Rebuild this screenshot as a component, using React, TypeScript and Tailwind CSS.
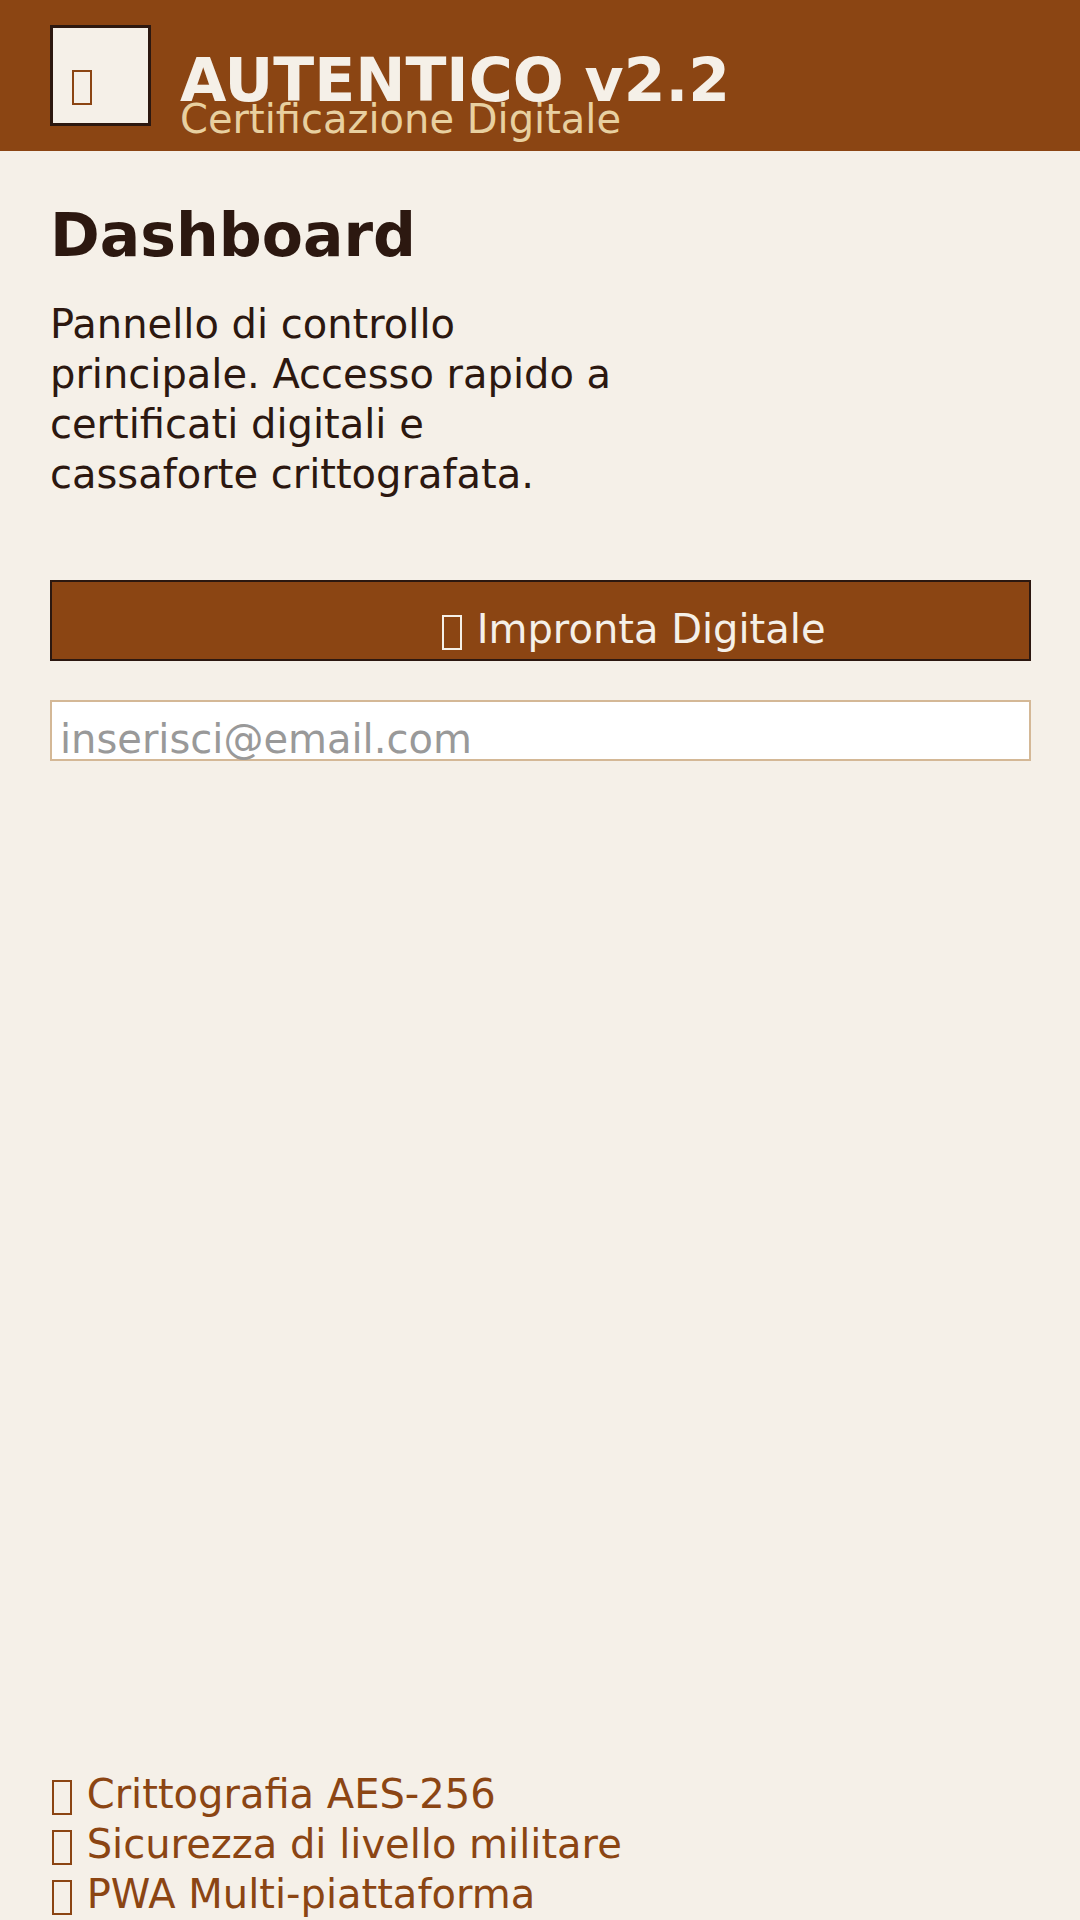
import React from "react";

function Glyph() {
  return (
    <span
      aria-hidden="true"
      className="mx-[2px] inline-block h-[35px] w-[20px] border-2 border-current align-[-7px]"
    />
  );
}

const features = ["Crittografia AES-256", "Sicurezza di livello militare", "PWA Multi-piattaforma"];

export default function App() {
  return (
    <div className="flex h-[1920px] w-[1080px] flex-col overflow-hidden bg-[#f5f0e8] font-['DejaVu_Sans',sans-serif] text-[40px] leading-[50px] text-[#2c1810]">
      <header className="flex h-[151px] shrink-0 bg-[#8b4513] pl-[50px] pt-[25px]">
        <div className="h-[101px] w-[101px] shrink-0 border-3 border-[#2c1810] bg-[#f5f0e8] pl-[17px] pt-[31px] text-[#8b4513]">
          <Glyph />
        </div>
        <div className="ml-[29px] whitespace-nowrap pt-[19px]">
          <h1 className="h-[50px] text-[60px] font-bold leading-[72px] text-[#f5f0e8]">AUTENTICO v2.2</h1>
          <p className="text-[#e8d0a0]">Certificazione Digitale</p>
        </div>
      </header>

      <main className="flex grow flex-col pl-[50px] pr-[49px]">
        <h2 className="mt-[48px] text-[60px] font-bold leading-[72px]">Dashboard</h2>
        <p className="mt-[28px] w-[600px]">
          Pannello di controllo
          <br />
          principale. Accesso rapido a
          <br />
          certificati digitali e
          <br />
          cassaforte crittografata.
        </p>
        <button className="mt-[81px] flex h-[81px] w-full shrink-0 items-start whitespace-pre border-2 border-[#2c1810] bg-[#8b4513] pl-[388px] pt-[22px] text-left text-[#f5f0e8]">
          <span>
            <Glyph /> Impronta Digitale
          </span>
        </button>
        <div className="mt-[39px] h-[61px] w-full shrink-0 border-2 border-[#d4b896] bg-white pl-[8px] pt-[12px] text-[#999999]">
          inserisci@email.com
        </div>
      </main>

      <footer className="h-[151px] shrink-0 pl-[50px] text-[#8b4513]">
        {features.map((f) => (
          <p key={f} className="h-[50px] whitespace-nowrap">
            <Glyph /> {f}
          </p>
        ))}
      </footer>
    </div>
  );
}
